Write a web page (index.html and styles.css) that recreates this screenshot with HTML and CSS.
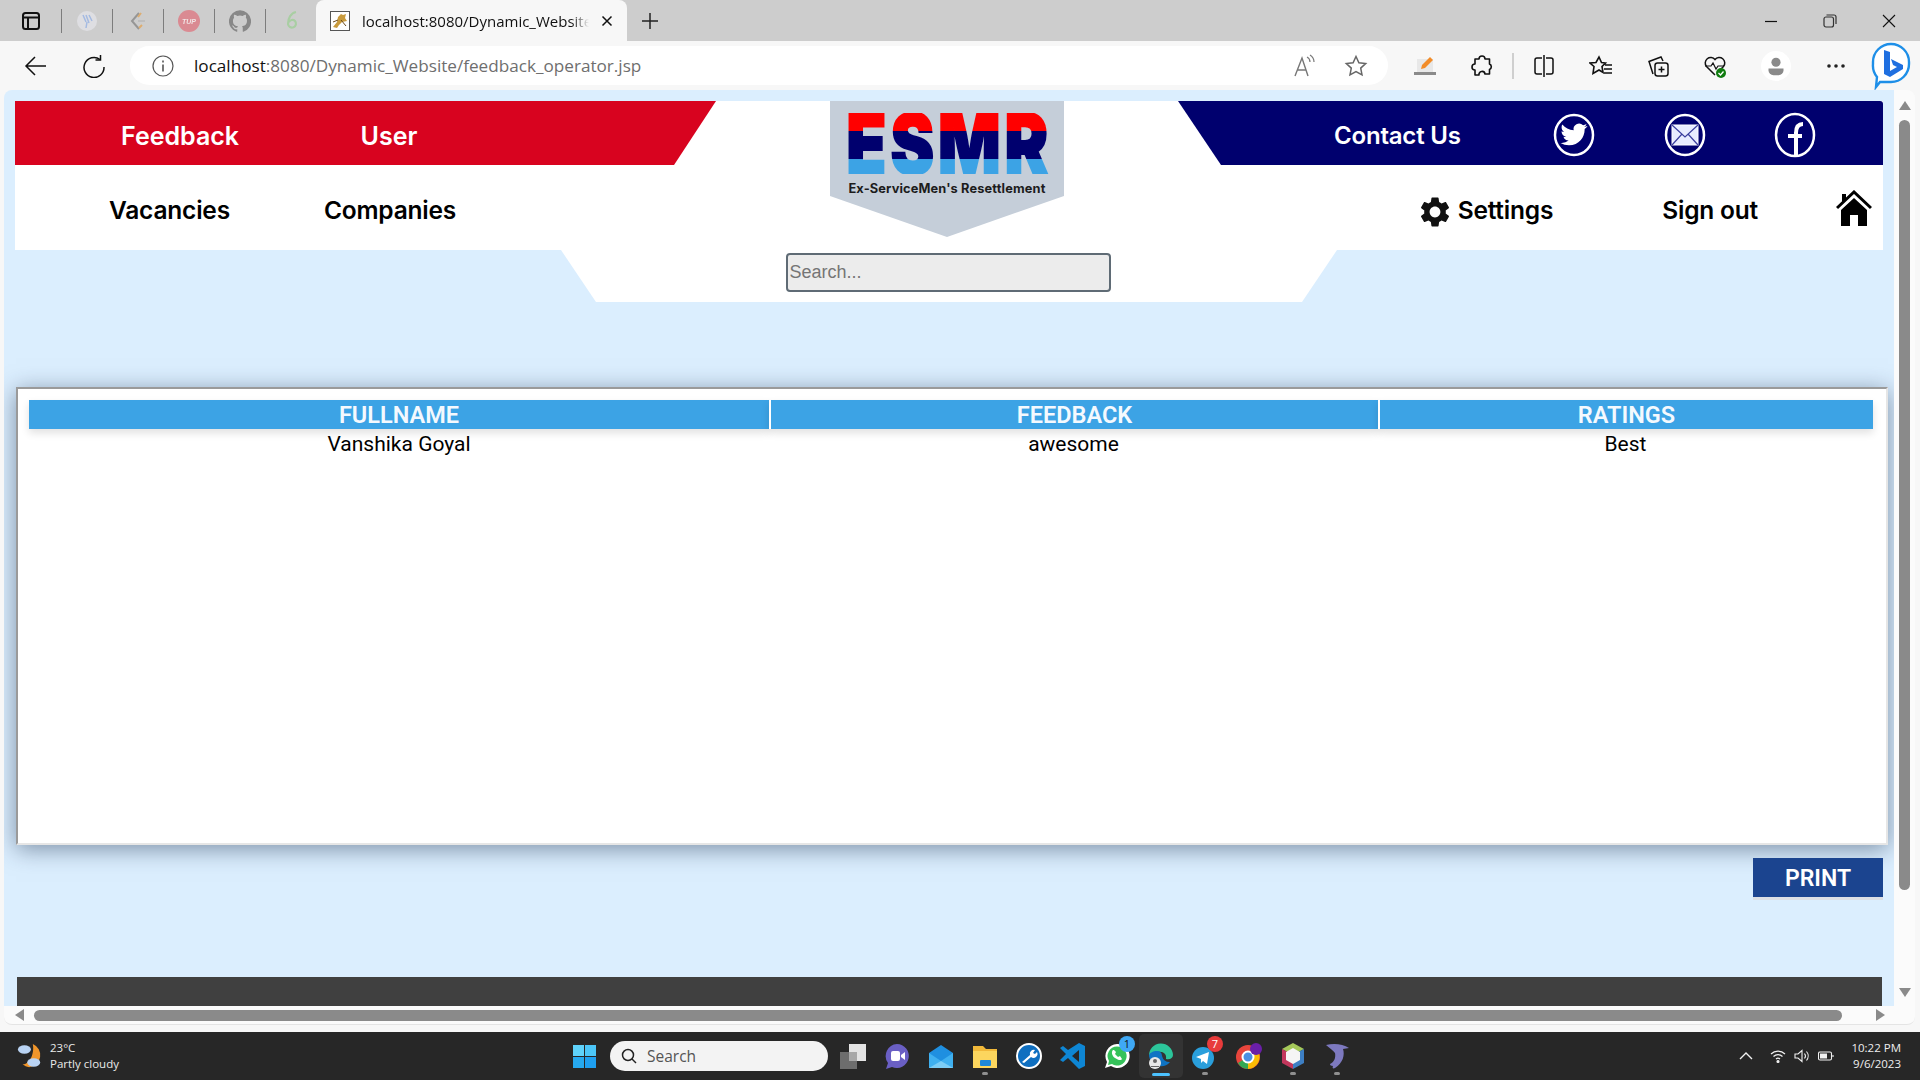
FILE: index.html
```html
<!DOCTYPE html>
<html lang="en">
<head>
<meta charset="utf-8">
<title>feedback_operator</title>
<link rel="stylesheet" href="styles.css">
</head>
<body>
<div class="tabstrip">
  <svg class="ic22 sidebar-ic" viewBox="0 0 22 22" fill="none" stroke="#111" stroke-width="2"><rect x="3" y="3" width="16" height="16" rx="2.5"/><path d="M3 7.5h16M8 7.5V19"/></svg>
  <div class="pinned">
    <span class="sep"></span>
    <span class="pin"><svg class="ic22" viewBox="0 0 22 22"><circle cx="11" cy="11" r="10" fill="#e2e2e6"/><path d="M7 5l3 7M10 5l3 8M13 5l3 6M11 12l-1 6" stroke="#9db7e6" stroke-width="1.5" fill="none"/></svg></span>
    <span class="sep"></span>
    <span class="pin"><svg class="ic22" viewBox="0 0 22 22" fill="none" stroke-width="2"><path d="M12 3L5 11l7 8" stroke="#8d8d8d"/><path d="M14 3l-3 4M12 18l3-3" stroke="#e0a860"/><path d="M11 11h7" stroke="#bcbcbc"/></svg></span>
    <span class="sep"></span>
    <span class="pin"><svg class="ic22" viewBox="0 0 22 22"><circle cx="11" cy="11" r="11" fill="#dd7f88"/><text x="11" y="13.500" text-anchor="middle" class="tup">TUP</text></svg></span>
    <span class="sep"></span>
    <span class="pin"><svg class="ic22" viewBox="0 0 24 24"><path fill="#7c7c7c" d="M12 .3a12 12 0 0 0-3.8 23.4c.6.1.8-.3.8-.6v-2c-3.3.7-4-1.6-4-1.6-.6-1.4-1.4-1.8-1.4-1.8-1-.7.1-.7.1-.7 1.2 0 1.9 1.200 1.900 1.200 1 1.800 2.800 1.300 3.500 1 0-.8.400-1.300.700-1.600-2.700-.3-5.500-1.300-5.500-6 0-1.200.500-2.300 1.300-3.100-.2-.4-.6-1.600 0-3.200 0 0 1-.3 3.400 1.200a11.500 11.500 0 0 1 6 0c2.300-1.500 3.300-1.200 3.300-1.200.6 1.600.2 2.800 0 3.200.9.800 1.300 1.900 1.300 3.200 0 4.600-2.800 5.600-5.500 5.900.5.400.9 1 .9 2.200v3.300c0 .3.100.7.800.6A12 12 0 0 0 12 .3"/></svg></span>
    <span class="sep"></span>
    <span class="pin"><svg class="ic22" viewBox="0 0 22 22" fill="none" stroke="#a3cf9c" stroke-width="2.200"><path d="M16 2c-5 1-8 6-8 12a4 4 0 1 0 7-3c-2-2-5-1-6 1"/></svg></span>
  </div>
  <div class="tab">
    <svg class="favicon" viewBox="0 0 20 20"><rect x=".5" y=".5" width="19" height="19" fill="#fff" stroke="#555"/><path d="M3 16l4-5 1-5 3-3 2 1 3-1-1 4 2 3-5 1-3 3-2 3z" fill="#c89a3c"/><path d="M11 9l5 6M8 9l-5 2" stroke="#6b4a1c"/></svg>
    <span class="tab-title">localhost:8080/Dynamic_Website/feedback_operator.jsp</span>
    <svg class="ic12" viewBox="0 0 12 12" stroke="#111" stroke-width="1.500"><path d="M1.500 1.500l9 9M10.500 1.500l-9 9"/></svg>
  </div>
  <svg class="ic18 newtab" viewBox="0 0 18 18" stroke="#222" stroke-width="1.500"><path d="M9 1v16M1 9h16"/></svg>
  <div class="winctl">
    <svg class="ic14" viewBox="0 0 14 14" stroke="#111" stroke-width="1.200"><path d="M1 7.500h12"/></svg>
    <svg class="ic14" viewBox="0 0 14 14" fill="none" stroke="#333" stroke-width="1.200"><rect x="1" y="3" width="9.500" height="10" rx="2"/><path d="M3.500 1H11a2 2 0 0 1 2 2v7"/></svg>
    <svg class="ic14" viewBox="0 0 14 14" stroke="#111" stroke-width="1.100"><path d="M1 1l12 12M13 1L1 13"/></svg>
  </div>
</div>

<div class="toolbar">
  <svg class="ic24 tb-back" viewBox="0 0 24 24" fill="none" stroke="#111" stroke-width="1.500"><path d="M22 12H2M11 3l-9 9 9 9"/></svg>
  <svg class="ic24 tb-reload" viewBox="0 0 24 24" fill="none" stroke="#111" stroke-width="1.500"><path d="M18 5.500A10 10 0 1 0 22 13"/><path d="M18.500 1v5h-5"/></svg>
  <div class="address">
    <svg class="ic22" viewBox="0 0 22 22" fill="none" stroke="#555" stroke-width="1.200"><circle cx="11" cy="11" r="10"/><path d="M11 9.500v7M11 5.500v2" stroke-width="1.600"/></svg>
    <span class="url"><span class="url-host">localhost</span>:8080/Dynamic_Website/feedback_operator.jsp</span>
    <svg class="ic24 addr-read" viewBox="0 0 24 24" fill="none" stroke="#777" stroke-width="1.400"><path d="M3 22L10 4l6 18M5.500 16h8.500"/><path d="M15 3c2 1 3 3 3 5M18 1c3 2 4 4 4 7" stroke-width="1.200"/></svg>
    <svg class="ic24" viewBox="0 0 24 24" fill="none" stroke="#666" stroke-width="1.500"><path d="M12 2.500l2.900 6.200 6.800.8-5 4.600 1.300 6.700-6-3.300-6 3.300 1.300-6.700-5-4.600 6.800-.8z"/></svg>
  </div>
  <div class="tb-icons">
    <svg class="ic24" viewBox="0 0 24 24"><rect x="4" y="5" width="16" height="13" fill="#e8e8e8"/><rect x="1" y="18" width="22" height="3" fill="#8a8a8a"/><path d="M8 15l1-4 8-8 3 3-8 8z" fill="#f28c28"/></svg>
    <svg class="ic24" viewBox="0 0 24 24" fill="none" stroke="#111" stroke-width="1.600"><path d="M9 5a3 3 0 0 1 6 0h4.500v5a3 3 0 0 1 0 5.500V20H15a3 3 0 0 0-6 1H5v-5a3 3 0 0 1 0-6V5z" stroke-linejoin="round"/></svg>
    <span class="tb-sep"></span>
    <svg class="ic24" viewBox="0 0 24 24" fill="none" stroke="#111" stroke-width="1.500"><path d="M10 4H5a2 2 0 0 0-2 2v12a2 2 0 0 0 2 2h5M14 4h5a2 2 0 0 1 2 2v12a2 2 0 0 1-2 2h-5M12 1v22"/></svg>
    <svg class="ic24" viewBox="0 0 24 24" fill="none" stroke="#111" stroke-width="1.600"><path d="M10 3l2.500 5.500 4 .5-3.500 3.500 1 6-4-2.500-6 3.500 1-7L1 9l6-.5zM16 11h7M15 15h8M15 19h8"/></svg>
    <svg class="ic24" viewBox="0 0 24 24" fill="none" stroke="#111" stroke-width="1.500"><rect x="9" y="9" width="13" height="13" rx="2.500"/><path d="M15.500 12.500v6M12.500 15.500h6M7 20L3 7.500 15 3l2 4"/></svg>
    <svg class="ic24" viewBox="0 0 24 24"><path d="M12 21L3.500 12.500a5.500 5.500 0 0 1 8.500-7 5.500 5.500 0 0 1 8.500 7L17 16" fill="none" stroke="#111" stroke-width="1.500"/><path d="M2 12h6l2-3 3 6 2-3h6" fill="none" stroke="#111" stroke-width="1.200"/><circle cx="18" cy="19" r="5" fill="#107c10"/><path d="M15.500 19l2 2 3-3.500" stroke="#fff" fill="none" stroke-width="1.300"/></svg>
    <span class="avatar"><svg class="ic24" viewBox="0 0 24 24" fill="#8a8a8a"><circle cx="12" cy="7.500" r="5.500"/><path d="M3 15h18v2a6 6 0 0 1-6 6H9a6 6 0 0 1-6-6z"/></svg></span>
    <svg class="ic24 dots" viewBox="0 0 24 24" fill="#222"><circle cx="5" cy="12" r="1.800"/><circle cx="12" cy="12" r="1.800"/><circle cx="19" cy="12" r="1.800"/></svg>
  </div>
  <svg class="bing" viewBox="0 0 40 48"><path d="M20 2a18 18 0 0 1 18 18v2a18 18 0 0 1-18 18H9l-4 5 1-10A18 18 0 0 1 2 22v-2A18 18 0 0 1 20 2z" fill="#fff" stroke="#1e8fe8" stroke-width="2.400"/><path d="M13 8l6 2v19l7-4-4-2-2-6 12 6v4l-13 8-6-3z" fill="#1f6fe0"/></svg>
</div>

<div class="window">
  <div class="view-row">
    <main class="page">
      <header class="site-header">
        <div class="topbar">
          <nav class="red-bar"><a class="nav-link big">Feedback</a><a class="nav-link big">User</a></nav>
          <nav class="navy-bar">
            <a class="nav-link contact">Contact Us</a>
            <svg class="social" viewBox="0 0 42 48" fill="none" stroke="#fff" stroke-width="2.500"><ellipse cx="21" cy="24" rx="19" ry="20"/><g transform="translate(7.500 10) scale(1.120)"><path fill="#fff" stroke="none" d="M23.953 4.570a10 10 0 0 1-2.825.775 4.958 4.958 0 0 0 2.163-2.723c-.951.555-2.005.959-3.127 1.184a4.920 4.920 0 0 0-8.384 4.482C7.690 8.095 4.067 6.130 1.640 3.162a4.822 4.822 0 0 0-.666 2.475c0 1.710.870 3.213 2.188 4.096a4.904 4.904 0 0 1-2.228-.616v.060a4.923 4.923 0 0 0 3.946 4.827 4.996 4.996 0 0 1-2.212.085 4.936 4.936 0 0 0 4.604 3.417 9.867 9.867 0 0 1-6.102 2.105c-.390 0-.779-.023-1.170-.067a13.995 13.995 0 0 0 7.557 2.209c9.053 0 13.998-7.496 13.998-13.985 0-.210 0-.420-.015-.630A9.935 9.935 0 0 0 24 4.590z"/></g></svg>
            <svg class="social" viewBox="0 0 42 48" fill="none" stroke="#fff" stroke-width="2.500"><ellipse cx="21" cy="24" rx="19" ry="20"/><rect x="8" y="14" width="26" height="20" fill="#e8ecff" stroke="#fff" stroke-width="1"/><path d="M8 14l13 12 13-12M8 34l10-11M34 34L24 23" stroke="#3b3f9e" stroke-width="1.200"/></svg>
            <svg class="social" viewBox="0 0 42 48" fill="none" stroke="#fff" stroke-width="2.500"><ellipse cx="21" cy="24" rx="19" ry="21"/><path d="M22 45V22c0-6 2-9 7-9M14 25h14" stroke-width="4"/></svg>
          </nav>
        </div>
        <div class="navline">
          <a class="nav-link dark">Vacancies</a>
          <a class="nav-link dark">Companies</a>
          <div class="nav-right">
            <a class="settings"><svg class="gear" viewBox="2 1.500 20 21"><path fill="#111" d="M19.140 12.940c.040-.300.060-.610.060-.940 0-.320-.020-.640-.070-.940l2.030-1.580c.180-.140.230-.410.120-.610l-1.920-3.320c-.120-.220-.370-.290-.590-.220l-2.390.960c-.500-.380-1.030-.700-1.620-.940l-.360-2.540c-.040-.240-.240-.410-.480-.410h-3.840c-.240 0-.430.170-.470.410l-.360 2.540c-.590.240-1.130.570-1.620.940l-2.390-.960c-.220-.080-.470 0-.590.220L2.740 8.870c-.120.210-.080.470.120.610l2.030 1.580c-.050.300-.090.630-.090.940s.020.640.070.940l-2.030 1.580c-.180.140-.230.410-.120.610l1.920 3.320c.120.220.370.290.590.220l2.390-.96c.500.380 1.030.700 1.620.940l.360 2.540c.050.240.240.410.480.410h3.840c.240 0 .440-.170.470-.410l.360-2.540c.590-.240 1.130-.560 1.620-.94l2.390.96c.220.080.470 0 .59-.22l1.920-3.320c.12-.22.07-.47-.12-.61l-2.010-1.580zM12 15.600c-1.980 0-3.600-1.620-3.600-3.600s1.620-3.600 3.600-3.600 3.600 1.620 3.600 3.600-1.620 3.600-3.600 3.600z"/></svg><span class="nav-link dark">Settings</span></a>
            <a class="nav-link dark">Sign out</a>
            <svg class="home" viewBox="0 0 36 36"><path d="M1 18L18 2l17 16" fill="none" stroke="#000" stroke-width="3"/><path d="M6 4h4v5l-4 4z" fill="#000"/><path d="M18 8L5 20v16h9V25h8v11h9V20z" fill="#000"/></svg>
          </div>
        </div>
        <div class="search-band"><input class="search" type="text" placeholder="Search..."></div>
        <div class="logo">
          <div class="logo-mark">ESMR</div>
          <div class="logo-sub">Ex-ServiceMen's Resettlement</div>
        </div>
      </header>

      <section class="card">
        <table class="report">
          <colgroup><col class="col-a"><col class="col-b"><col class="col-c"></colgroup>
          <thead><tr><th>FULLNAME</th><th>FEEDBACK</th><th>RATINGS</th></tr></thead>
          <tbody><tr><td>Vanshika Goyal</td><td>awesome</td><td>Best</td></tr></tbody>
        </table>
      </section>
      <div class="print-row"><button class="print">PRINT</button></div>
      <footer class="site-footer"></footer>
    </main>
    <div class="vscroll">
      <span class="arrow-up"></span>
      <span class="vthumb"></span>
      <span class="arrow-down"></span>
    </div>
  </div>
  <div class="hscroll">
    <span class="arrow-left"></span>
    <span class="hthumb"></span>
    <span class="arrow-right"></span>
  </div>
</div>

<div class="taskbar">
  <div class="weather">
    <svg class="weather-ic" viewBox="0 0 28 28"><path d="M17 1a13 13 0 0 1-4 25A13 13 0 0 1 6 23c8 0 13-12 11-22z" fill="#f0952a"/><ellipse cx="8" cy="7" rx="7" ry="4.500" fill="#b9d3f3"/><ellipse cx="18" cy="21" rx="7" ry="4.500" fill="#b9d3f3"/></svg>
    <div class="weather-text"><span>23°C</span><span>Partly cloudy</span></div>
  </div>
  <svg class="winlogo" viewBox="0 0 23 23"><rect width="11" height="11" fill="#5fd3fb"/><rect x="12" width="11" height="11" fill="#4cc6f8"/><rect y="12" width="11" height="11" fill="#26a9ef"/><rect x="12" y="12" width="11" height="11" fill="#1e9ff0"/></svg>
  <div class="tb-search">
    <svg class="ic16" viewBox="0 0 16 16" fill="none" stroke="#222" stroke-width="1.500"><circle cx="7" cy="7" r="5.500"/><path d="M11 11l4 4"/></svg>
    <span>Search</span>
  </div>
  <div class="apps">
    <span class="app"><svg class="ic28" viewBox="0 0 28 28"><rect x="10" y="2" width="17" height="17" fill="#e4e4e4"/><rect x="1" y="10" width="17" height="17" fill="#6d6d6d"/><rect x="10" y="10" width="8" height="9" fill="#a8a8a8"/></svg></span>
    <span class="app"><svg class="ic28" viewBox="0 0 28 28"><path d="M14 2a12 12 0 1 1-5 23l-6 2 2-6A12 12 0 0 1 14 2z" fill="#6a5fc4"/><rect x="8" y="9" width="9" height="10" rx="2" fill="#fff"/><path d="M18 13l4-3v8l-4-3z" fill="#fff"/></svg></span>
    <span class="app"><svg class="ic28" viewBox="0 0 28 28"><path d="M2 11L14 3l12 8v15H2z" fill="#1f8fe0"/><path d="M2 11l12 8 12-8v15H2z" fill="#3fb0f0"/><path d="M2 26l12-7 12 7z" fill="#7ccdf6"/></svg></span>
    <span class="app dotted"><svg class="ic28" viewBox="0 0 28 28"><path d="M2 4h10l3 3h11v19H2z" fill="#f2b93a"/><path d="M2 9h24v17H2z" fill="#fcd65e"/><rect x="9" y="18" width="11" height="6" rx="1" fill="#1e88d8"/></svg></span>
    <span class="app"><svg class="ic28" viewBox="0 0 28 28"><circle cx="14" cy="14" r="12" fill="#0f6fc0" stroke="#fff" stroke-width="2"/><path d="M7 20l8-7a4 4 0 0 1 5-5l-2 3 2 1 2-2a4 4 0 0 1-6 5l-7 6z" fill="#fff"/></svg></span>
    <span class="app"><svg class="ic28" viewBox="0 0 28 28"><path d="M20 1l6 3v20l-6 3-11-11-5 4-3-2 6-6-6-6 3-2 5 4z" fill="#0e86d4"/><path d="M20 8v12l-7-6z" fill="#272727"/></svg></span>
    <span class="app"><svg class="ic28" viewBox="0 0 28 28"><path d="M14 2a12 12 0 1 1-6 22l-6 2 2-6A12 12 0 0 1 14 2z" fill="#fff"/><path d="M14 4.500a9.500 9.500 0 1 1-5 17.500l-4 1 1-4A9.500 9.500 0 0 1 14 4.500z" fill="#35c25a"/><path d="M10 8c-2 2-1 6 2 8s6 3 7 1l-2-3-2 1-3-3 1-2-2-2z" fill="#fff"/></svg><span class="badge badge-blue">1</span></span>
    <span class="app active"><svg class="ic28" viewBox="0 0 28 28"><path d="M2 14a12 12 0 0 1 24-1c0 3-3 5-7 4 1-5-3-8-8-7-5 0-8 2-9 4z" fill="#2cc59a"/><path d="M2 14c0-3 4-5 8-5 3 0 5 2 5 5a8 8 0 0 0 8 6 12 12 0 0 1-21-6z" fill="#0f74c4"/><circle cx="8" cy="21" r="6" fill="#e8e8e8"/><circle cx="8" cy="19" r="2" fill="#666"/><path d="M4 24h8v1H4z" fill="#666"/></svg></span>
    <span class="app dotted"><svg class="ic28" viewBox="0 0 28 28"><circle cx="12" cy="16" r="11" fill="#2a9fdc"/><path d="M5 15l13-5-2 12-4-3-2 2v-4z" fill="#fff"/></svg><span class="badge badge-red">7</span></span>
    <span class="app"><svg class="ic28" viewBox="0 0 28 28"><circle cx="13" cy="15" r="12" fill="#e8453c"/><path d="M13 15L3 21a12 12 0 0 0 10 6z" fill="#34a853"/><path d="M13 15l10-6a12 12 0 0 1-10 18z" fill="#fbbc05"/><circle cx="13" cy="15" r="5.500" fill="#4a90e2" stroke="#fff" stroke-width="2"/><circle cx="21" cy="7" r="6" fill="#6a1fa8"/></svg></span>
    <span class="app dotted"><svg class="ic28" viewBox="0 0 28 28"><path d="M14 1l11 6-11 6L3 7z" fill="#a5c95a"/><path d="M3 7l11 6v14L3 21z" fill="#c2375c"/><path d="M25 7l-11 6v14l11-6z" fill="#3d7fc4"/><path d="M14 6l7 4v8l-7 4-7-4v-8z" fill="#f5f5f5"/></svg></span>
    <span class="app dotted"><svg class="ic28" viewBox="0 0 28 28"><path d="M3 3c8-2 17-1 23 3l-6 1c2 6 0 14-8 19-2 1-3 0-2-2-2 0-3-1-3-2 4-2 6-6 5-11C10 8 6 6 3 3z" fill="#7d79bf"/></svg></span>
  </div>
  <div class="tray">
    <svg class="ic16 tray-up" viewBox="0 0 16 16" fill="none" stroke="#f2f2f2" stroke-width="1.400"><path d="M2 11l6-6 6 6"/></svg>
    <svg class="ic16" viewBox="0 0 16 16" fill="none" stroke="#f2f2f2" stroke-width="1.200"><path d="M1 6a10 10 0 0 1 14 0M3.500 8.500a6.500 6.500 0 0 1 9 0M6 11a3 3 0 0 1 4 0"/><circle cx="8" cy="13.500" r="1" fill="#f2f2f2"/></svg>
    <svg class="ic16" viewBox="0 0 16 16" fill="none" stroke="#f2f2f2" stroke-width="1.100"><path d="M1 6h3l4-3.500v11L4 10H1zM10.500 5.500a4 4 0 0 1 0 5M12.500 3.500a7 7 0 0 1 0 9"/></svg>
    <svg class="ic16" viewBox="0 0 16 16" fill="none" stroke="#f2f2f2" stroke-width="1.100"><rect x=".5" y="4" width="13" height="8" rx="1.500"/><rect x="2" y="5.500" width="7" height="5" fill="#f2f2f2" stroke="none"/><path d="M15 7v2"/></svg>
    <div class="clock"><span>10:22 PM</span><span>9/6/2023</span></div>
  </div>
</div>
</body>
</html>
```
FILE: styles.css
```css
* { box-sizing: border-box; }
html, body { margin: 0; padding: 0; }
body {
  width: 1920px; height: 1080px; overflow: hidden;
  display: flex; flex-direction: column;
  background: #f7f7f7;
  font-family: "Open Sans", "Noto Sans", sans-serif;
}
svg { display: block; flex: none; }
.ic12 { width: 12px; height: 12px; }
.ic14 { width: 14px; height: 14px; }
.ic16 { width: 16px; height: 16px; }
.ic18 { width: 18px; height: 18px; }
.ic22 { width: 22px; height: 22px; }
.ic24 { width: 24px; height: 24px; }
.ic28 { width: 28px; height: 28px; }
.tup { font-family: "Liberation Sans", sans-serif; font-size: 7px; font-weight: 700; font-style: italic; fill: #f7e8e9; }

/* browser tab strip */
.tabstrip { height: 41px; flex: none; display: flex; align-items: center; background: #cdcdcd; padding-left: 20px; }
.pinned { display: flex; align-items: center; margin-left: 19px; }
.sep { width: 1px; height: 24px; background: #7d7d7d; }
.pin { width: 50px; display: flex; justify-content: center; opacity: .85; }
.tab {
  align-self: flex-end; height: 41px; width: 311px; margin-left: 0;
  display: flex; align-items: center; gap: 12px; padding: 0 14px 0 14px;
  background: #f7f7f7; border-radius: 8px 8px 0 0;
}
.favicon { width: 20px; height: 20px; }
.tab-title { flex: 1; min-width: 0; white-space: nowrap; overflow: hidden; font-size: 15px; color: #111; -webkit-mask-image: linear-gradient(90deg, #000 92%, transparent); mask-image: linear-gradient(90deg, #000 92%, transparent); }
.newtab { margin-left: 14px; }
.winctl { margin-left: auto; display: flex; align-items: center; gap: 45px; padding-right: 24px; }

/* browser toolbar */
.toolbar { height: 49px; flex: none; display: flex; align-items: center; background: #f7f7f7; padding-left: 24px; }
.tb-reload { margin-left: 34px; }
.address {
  margin-left: 24px; width: 1258px; height: 39px; border-radius: 20px; background: #fff;
  display: flex; align-items: center; padding: 0 20px 0 22px;
}
.url { margin-left: 20px; font-size: 17.150px; color: #6e6e6e; white-space: nowrap; }
.url-host { color: #111; }
.addr-read { margin-left: auto; margin-right: 28px; }
.tb-icons { display: flex; align-items: center; gap: 33px; margin-left: 25px; }
.tb-icons .ic24 { flex: none; }
.tb-sep { width: 2px; height: 26px; background: #cfcfcf; margin: 0 -15px; }
.avatar { width: 30px; height: 30px; margin: 0 0 0 1px; border-radius: 50%; background: #fff; display: flex; align-items: center; justify-content: center; }
.avatar .ic24 { width: 20px; height: 20px; }
.bing { width: 40px; height: 48px; margin-left: 23px; }

/* browser viewport */
.window { flex: 1; min-height: 0; display: flex; flex-direction: column; padding: 0 5px 7px 4px; }
.view-row { flex: none; height: 916px; display: flex; }
.page {
  width: 1890px; height: 916px; overflow: hidden; background: #dbeefe;
  border-radius: 8px 0 0 0; padding: 11px 11px 0 11px;
  font-family: Inter, "Liberation Sans", sans-serif;
}
.vscroll { width: 21px; background: #fbfbfb; display: flex; flex-direction: column; align-items: center; padding-top: 11px; border-radius: 0 8px 0 0; }
.arrow-up { width: 0; height: 0; border: 6px solid transparent; border-top: 0; border-bottom: 9px solid #8a8a8a; }
.vthumb { width: 11px; height: 770px; margin-top: 10px; border-radius: 6px; background: #8a8a8a; }
.arrow-down { width: 0; height: 0; margin-top: auto; margin-bottom: 9px; border: 6px solid transparent; border-bottom: 0; border-top: 9px solid #8a8a8a; }
.hscroll { flex: none; height: 19px; background: #fbfbfb; display: flex; align-items: center; padding: 0 30px 0 11px; border-radius: 0 0 8px 8px; border-bottom: 1px solid #e4e4e4; }
.arrow-left { width: 0; height: 0; border: 6px solid transparent; border-left: 0; border-right: 9px solid #8a8a8a; }
.hthumb { width: 1808px; height: 11px; margin-left: 10px; border-radius: 6px; background: #8a8a8a; }
.arrow-right { width: 0; height: 0; margin-left: auto; border: 6px solid transparent; border-right: 0; border-left: 9px solid #8a8a8a; }

/* site header */
.site-header { position: relative; width: 1868px; }
.topbar { height: 64px; display: flex; justify-content: space-between; background: #fff; }
.nav-link { font-size: 24.500px; font-weight: 600; letter-spacing: -.2px; white-space: nowrap; }
.nav-link.big { font-size: 25px; letter-spacing: 0; }
.red-bar {
  width: 701px; background: #d8031f; color: #fff;
  clip-path: polygon(0 0, 100% 0, 659px 100%, 0 100%);
  display: flex; align-items: center; gap: 121.500px; padding: 5px 0 0 106px;
}
.navy-bar {
  width: 705px; background: #00006e; color: #fff; border-radius: 0 3px 0 0;
  clip-path: polygon(0 0, 100% 0, 100% 100%, 43px 100%);
  display: flex; align-items: center; padding: 4px 0 0 156px;
}
.contact { flex: none; width: 219px; font-size: 24px; }
.social { width: 42px; height: 48px; margin-right: 68.500px; }
.navline { height: 85px; background: #fff; display: flex; align-items: center; padding: 5px 0 0 94px; gap: 94px; }
.dark { color: #000; }
.nav-right { margin-left: auto; display: flex; align-items: center; }
.settings { display: flex; align-items: center; gap: 8px; }
.gear { width: 30px; height: 32px; margin-top: 3px; }
.nav-right > .nav-link { margin-left: 109px; }
.home { width: 36px; height: 36px; margin: 0 11px 4px 78px; }
.search-band {
  width: 776px; height: 52px; margin-left: 546px; background: #fff;
  clip-path: polygon(0 0, 100% 0, 741px 100%, 35px 100%);
  display: flex; justify-content: center; padding: 3px 2px 0 0;
}
.search {
  width: 325px; height: 39px; border: 2px solid #5f6b75; border-radius: 4px; background: #ececec;
  padding: 0 2px; font-family: "Liberation Sans", sans-serif; font-size: 18px; outline: none;
}
.logo {
  position: absolute; left: 815px; top: 0; width: 234px; height: 136px;
  background: #c5ced9; clip-path: polygon(0 0, 100% 0, 100% 95px, 50% 100%, 0 95px);
  display: flex; flex-direction: column; align-items: center; padding-top: 12px;
}
.logo-mark {
  height: 61px; line-height: 61px; font-size: 84px; font-weight: 900; letter-spacing: 5px;
  font-family: Inter, "Liberation Sans", sans-serif;
  white-space: nowrap; transform: scaleX(.78) translateX(3px);
  color: transparent;
  -webkit-text-stroke: 2px transparent;
  background: linear-gradient(180deg, #ff0000 0 29%, #00006e 29% 76%, #3ca3e5 76%);
  -webkit-background-clip: text; background-clip: text;
}
.logo-sub { margin-top: 7px; font-size: 12.800px; font-weight: 700; color: #1c1c1c; white-space: nowrap; letter-spacing: .15px; }

/* report card */
.card {
  margin: 85px 0 0 1px; width: 1872px; height: 458px; background: #fff; padding: 11px 11px;
  border: 2px solid; border-color: #9a9a9a #e6e6e6 #e6e6e6 #9a9a9a;
  box-shadow: 0 4px 22px rgba(30, 50, 80, .5);
}
.report { width: 1844px; table-layout: fixed; border-collapse: separate; border-spacing: 0; }
.col-a { width: 740px; }
.col-b { width: 609px; }
.col-c { width: 495px; }
.report th { height: 29px; padding: 0; background: #3ca3e5; color: #f4f9fe; font-size: 23.500px; font-weight: 600; border-left: 2px solid #fff; font-family: Roboto, sans-serif; box-shadow: 0 4px 8px rgba(0,0,0,.12); }
.report th:first-child { border-left: 0; }
.report td { height: 30px; padding: 0; text-align: center; font-size: 21px; color: #000; font-family: Roboto, sans-serif; }
.print-row { display: flex; justify-content: flex-end; width: 1868px; margin-top: 13px; }
.print {
  width: 130px; height: 42px; border: 0; border-bottom: 3px solid #dcdfe4; background: #1b448f; color: #fff;
  font-family: Roboto, sans-serif; font-size: 23px; font-weight: 600; padding: 2px 0 0;
}
.site-footer { margin: 77px 0 0 2px; width: 1865px; height: 29px; background: #404040; }

/* taskbar */
.taskbar { height: 48px; flex: none; display: flex; align-items: center; background: #272727; color: #f2f2f2; }
.weather { width: 573px; flex: none; display: flex; align-items: center; gap: 7px; padding-left: 17px; }
.weather-ic { width: 26px; height: 28px; }
.weather-text { display: flex; flex-direction: column; gap: 2px; font-size: 11.500px; line-height: 14px; color: #eaeaea; }
.winlogo { width: 23px; height: 23px; }
.tb-search {
  margin-left: 14px; width: 218px; height: 30px; border-radius: 15px; background: #f3f3f3; color: #555;
  display: flex; align-items: center; gap: 10px; padding-left: 11px; font-size: 15.500px;
}
.apps { display: flex; margin-left: 3px; }
.app { position: relative; width: 44px; height: 44px; display: flex; align-items: center; justify-content: center; border-radius: 5px; }
.app.active { background: #333; }
.app.active::after { content: ""; position: absolute; left: 13px; bottom: 2px; width: 18px; height: 3px; border-radius: 2px; background: #4cc2ff; }
.app.dotted::after { content: ""; position: absolute; left: 19px; bottom: 3px; width: 6px; height: 3px; border-radius: 2px; background: #8f8f8f; }
.badge { position: absolute; top: 2px; left: 24px; width: 16px; height: 16px; border-radius: 50%; font-size: 11px; line-height: 16px; text-align: center; color: #fff; font-family: "Open Sans", sans-serif; }
.badge-blue { background: #3fa9f5; color: #111; }
.badge-red { background: #e83b3b; }
.tray { margin-left: auto; display: flex; align-items: center; gap: 8px; padding-right: 19px; }
.tray-up { margin-right: 8px; }
.clock { margin-left: 9px; display: flex; flex-direction: column; align-items: flex-end; gap: 2px; font-size: 11.500px; line-height: 14px; color: #eee; }
```
